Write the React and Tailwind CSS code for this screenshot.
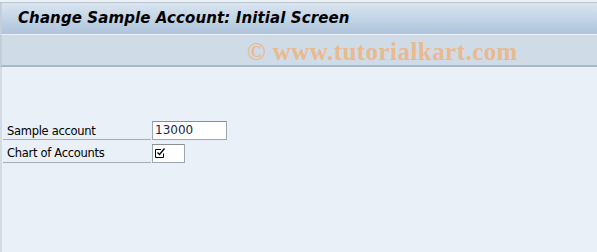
export default function App() {
  return (
    <div className="w-[597px] h-[252px] bg-[#e9f0f7] overflow-hidden flex flex-col" style={{ fontFamily: "Tahoma, 'DejaVu Sans', sans-serif" }}>
      {/* top stripe */}
      <div className="h-[3px] bg-[#edf1f5] border-b border-[#b9c5d1]" />
      {/* title bar */}
      <div className="h-[31px] border-l-2 border-[#c4ced8] bg-gradient-to-b from-[#dae5f0] to-[#adc4db] flex items-center pl-[16px]">
        <h1 className="text-[15px] font-bold italic text-black tracking-[0.1px] font-['DejaVu_Sans',sans-serif]">
          Change Sample Account: Initial Screen
        </h1>
      </div>
      {/* toolbar */}
      <div className="h-[33px] border-t border-[#eaf0f5] border-b-2 border-b-[#a9b9c8] border-l-2 border-l-[#c4ced8] bg-[#cfdce7] flex items-center pl-[245px] pt-[3px]">
        <span className="text-[25px] font-bold text-[#eab98e] font-['Liberation_Serif',serif] leading-none tracking-[0.45px]">
          © www.tutorialkart.com
        </span>
      </div>
      {/* body */}
      <div className="flex-1 border-l-2 border-[#d4dbe3] pt-[54px] pl-[1px]">
        <div className="flex items-end">
          <div className="w-[148px] h-[18px] border-b border-[#a7adb4] pl-[4px] text-[11.5px] leading-[18px] text-black font-['DejaVu_Sans',sans-serif] tracking-[-0.3px]">
            Sample account
          </div>
          <div className="ml-[1px] w-[75px] h-[19px] bg-white border border-[#9ea6ae] border-t-[#8a9096] pl-[2px] text-[12px] leading-[17px] text-[#1d2540] font-['DejaVu_Sans',sans-serif]">
            13000
          </div>
        </div>
        <div className="flex items-end mt-[4px]">
          <div className="w-[148px] h-[19px] border-b border-[#a7adb4] pl-[4px] text-[11.5px] leading-[19px] text-black font-['DejaVu_Sans',sans-serif] tracking-[-0.3px]">
            Chart of Accounts
          </div>
          <div className="ml-[1px] w-[33px] h-[19px] bg-white border border-[#9ea6ae] border-t-[#8a9096] flex items-center pl-[2px]">
            <svg width="11" height="11" viewBox="0 0 11 11">
              <path d="M6 1.5 H0.5 V9.5 H8.5 V5.5" fill="none" stroke="#000" />
              <path d="M2.5 4.5 L4.5 6.5 L9.5 0.5" fill="none" stroke="#000" strokeWidth="1.3" />
            </svg>
          </div>
        </div>
      </div>
    </div>
  );
}
